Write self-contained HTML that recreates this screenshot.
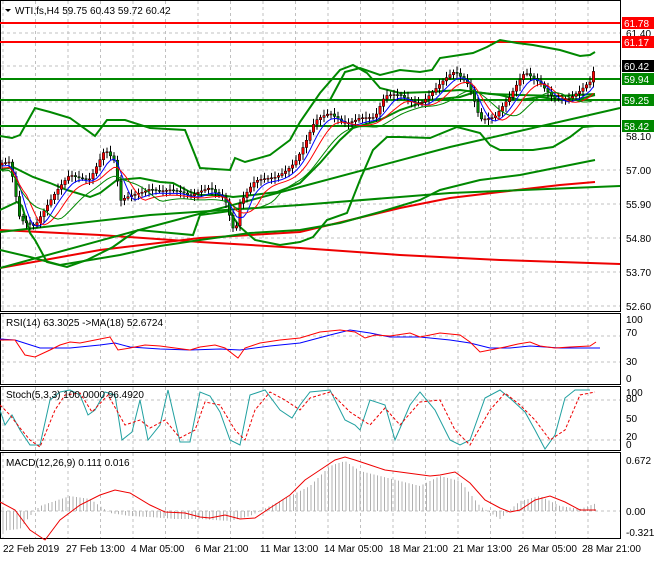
<!DOCTYPE html>
<html><head><meta charset="utf-8"><style>
body{margin:0;background:#fff;width:660px;height:560px;overflow:hidden;font-family:"Liberation Sans",sans-serif}
svg text{font-family:"Liberation Sans",sans-serif;font-size:10px;fill:#000}
</style></head><body>
<svg id="s" width="660" height="560" xmlns="http://www.w3.org/2000/svg">
<rect width="660" height="560" fill="#fff"/>
<g id="grid" stroke="#c0c0c0" stroke-dasharray="3,3" stroke-width="1"></g>
<g fill="none" stroke="#000" stroke-width="1">
<rect x="0.5" y="0.5" width="620" height="311"/>
<rect x="0.5" y="313.5" width="620" height="71"/>
<rect x="0.5" y="386.5" width="620" height="64"/>
<rect x="0.5" y="452.5" width="620" height="86"/>
</g>
<g fill="none" stroke-width="2">
<line x1="0" y1="23" x2="620" y2="23" stroke="#f00"/>
<line x1="0" y1="42" x2="620" y2="42" stroke="#f00"/>
<line x1="0" y1="79" x2="620" y2="79" stroke="#080"/>
<line x1="0" y1="100" x2="620" y2="100" stroke="#080"/>
<line x1="0" y1="126" x2="620" y2="126" stroke="#080"/>
<polyline points="0,230 100,235 200,242 300,248 400,255 500,260 620,264" stroke="#e00"/>
<polyline points="0,268 100,250 200,238 300,232 350,220 400,208 450,198 500,192 560,185 595,182" stroke="#e00"/>
<polyline points="0,232 150,215 300,205 450,193 620,186" stroke="#080"/>
<polyline points="0,268 150,227 300,187 450,147 620,108" stroke="#080"/>
<polyline points="0,250 30,257 60,265 90,260 120,255 160,246 200,240 250,233 300,230 340,223 380,212 420,200 440,190 480,180 520,175 560,167 595,160" stroke="#080"/>
<!-- outer upper band -->
<polyline points="0,136 12,138 20,135 35,108 50,112 70,118 95,136 107,120 125,120 150,128 185,130 195,155 200,168 230,170 235,158 245,162 270,155 290,140 300,122 320,93 340,70 353,65 367,73 380,88 400,93 430,92 460,90 490,94 520,95 560,96 595,94" stroke="#080"/>
<!-- top band -->
<polyline points="330,100 345,72 360,68 380,75 400,70 420,72 432,70 440,58 460,55 473,53 487,47 500,40 517,43 533,45 560,50 580,56 590,55 595,52" stroke="#080"/>
<!-- inner band upper -->
<polyline points="0,170 13,167 23,172 33,177 50,183 67,190 90,197 100,193 117,180 140,178 160,182 173,183 190,192 200,195 220,195 233,197 253,195 277,192 300,183 320,163 340,140 353,128 380,120 400,110 430,100 460,97 475,92 500,95 520,100 540,97 560,100 580,99 595,95" stroke="#080"/>
<!-- outer lower -->
<polyline points="0,210 17,202 22,206 30,233 35,240 47,262 67,267 87,260 113,247 127,237 138,230 160,232 193,235 200,215 230,211 233,217 240,227 255,240 280,245 300,242 313,237 327,220 347,213 360,180 373,150 387,137 400,137 430,138 457,127 480,133 490,145 500,150 533,150 553,147 570,137 583,127 595,126" stroke="#080"/>
</g>
<g id="cand"></g>
<g id="ma" fill="none" stroke-width="1"></g>
<g id="axis"></g>
<rect x="622" y="17" width="32" height="12" fill="#f00"/><text x="624" y="27" style="fill:#fff">61.78</text>
<rect x="622" y="36" width="32" height="12" fill="#f00"/><text x="624" y="46" style="fill:#fff">61.17</text>
<rect x="622" y="60" width="32" height="12" fill="#000"/><text x="624" y="70" style="fill:#fff">60.42</text>
<rect x="622" y="73" width="32" height="12" fill="#080"/><text x="624" y="83" style="fill:#fff">59.94</text>
<rect x="622" y="94" width="32" height="12" fill="#080"/><text x="624" y="104" style="fill:#fff">59.25</text>
<rect x="622" y="120" width="32" height="12" fill="#080"/><text x="624" y="130" style="fill:#fff">58.42</text>
<path d="M5,9 L11,9 L8,12 Z" fill="#000"/>
<text x="15" y="14">WTI.fs,H4  59.75 60.43 59.72 60.42</text>
<polyline fill="none" stroke="#00f" points="0,339 15,340 40,348 70,348 100,345 115,343 130,347 160,349 190,350 220,349 240,350 270,346 300,343 330,335 350,330 370,333 390,337 420,337 450,340 470,343 490,348 510,348 530,346 560,348 590,348 600,348"/>
<polyline fill="none" stroke="#f00" points="0,340 15,340 25,355 35,357 50,350 60,345 70,342 80,343 95,340 110,337 118,350 130,348 145,345 160,346 175,348 190,350 200,347 215,345 225,348 238,358 245,348 260,343 280,340 300,338 320,332 340,330 355,332 365,338 375,335 390,336 410,333 420,337 440,333 460,335 470,342 480,352 490,350 505,347 518,344 530,342 540,346 555,348 570,347 590,346 596,342"/>
<text x="6" y="326">RSI(14) 63.3025  -&gt;MA(18) 52.6724</text>
<text x="626" y="323">100</text><text x="626" y="336">70</text><text x="626" y="365">30</text><text x="626" y="382">0</text>
<polyline fill="none" stroke="#20a0a0" points="0,410 5,425 12,415 20,430 30,445 40,445 50,400 60,392 70,390 80,395 88,415 95,410 105,392 115,395 122,440 132,432 140,400 148,440 160,425 168,390 180,442 190,442 200,392 210,396 220,412 230,440 240,445 250,395 265,390 280,410 292,418 300,405 310,392 330,390 345,420 355,425 360,430 370,400 385,405 395,440 410,405 420,392 435,410 450,440 460,445 470,440 485,398 500,390 512,400 525,412 535,430 545,449 555,435 565,398 575,390 590,390"/>
<polyline fill="none" stroke="#e00" stroke-dasharray="3,2" points="0,405 10,415 20,428 30,440 40,447 55,410 65,395 80,393 92,412 108,395 125,425 140,420 150,428 165,420 180,438 195,430 205,402 220,405 235,430 245,440 255,410 270,392 285,400 300,410 310,398 330,392 350,412 370,425 385,408 400,425 420,402 440,400 455,430 470,445 490,410 505,393 520,405 535,420 550,440 565,430 580,395 595,392"/>
<text x="6" y="398">Stoch(5,3,3) 100.0000 96.4920</text>
<text x="626" y="396">100</text><text x="626" y="402">80</text><text x="626" y="422">50</text><text x="626" y="440">20</text><text x="626" y="448">0</text>
<g id="hist" stroke="#b0b0b0" stroke-width="1"></g>
<polyline fill="none" stroke="#e00" points="0,502 15,510 30,530 45,540 60,520 80,505 100,495 115,490 130,493 150,505 165,512 185,513 200,517 210,518 225,515 240,519 255,518 270,508 290,495 305,480 320,470 335,460 345,457 355,460 370,465 385,470 400,472 415,474 430,476 440,475 455,472 470,483 485,500 500,508 510,512 520,510 535,500 550,496 565,502 580,510 596,510"/>
<text x="6" y="466">MACD(12,26,9) 0.111 0.016</text>
<text x="626" y="464">0.672</text><text x="626" y="515">0.00</text><text x="626" y="536">-0.321</text>
<g font-size="10">
<text x="3" y="552">22 Feb 2019</text><text x="66" y="552">27 Feb 13:00</text><text x="131" y="552">4 Mar 05:00</text><text x="195" y="552">6 Mar 21:00</text><text x="260" y="552">11 Mar 13:00</text><text x="324" y="552">14 Mar 05:00</text><text x="389" y="552">18 Mar 21:00</text><text x="453" y="552">21 Mar 13:00</text><text x="518" y="552">26 Mar 05:00</text><text x="582" y="552">28 Mar 21:00</text>
</g>
</svg>
<script>
var NS="http://www.w3.org/2000/svg";
function el(p,t,a){var e=document.createElementNS(NS,t);for(var k in a)e.setAttribute(k,a[k]);document.getElementById(p).appendChild(e);return e;}
for(var x=3;x<620;x+=32.5){el("grid","line",{x1:x,y1:1,x2:x,y2:311});el("grid","line",{x1:x,y1:314,x2:x,y2:384});el("grid","line",{x1:x,y1:387,x2:x,y2:450});el("grid","line",{x1:x,y1:453,x2:x,y2:538});}
[33,66,102,136,170,204,238,272,306].forEach(function(y){el("grid","line",{x1:1,y1:y,x2:620,y2:y});});
[336,362,400,440,511].forEach(function(y){el("grid","line",{x1:1,y1:y,x2:620,y2:y});});
var ax=[["61.40",37],["58.10",140],["57.00",174],["55.90",208],["54.80",242],["53.70",276],["52.60",310]];
ax.forEach(function(a){var t=el("axis","text",{x:626,y:a[1]});t.textContent=a[0];});
var k=[[0,165],[10,160],[20,215],[35,225],[50,205],[70,175],[90,175],[105,150],[115,165],[120,205],[135,195],[150,185],[170,190],[190,200],[210,185],[225,195],[235,235],[240,205],[255,185],[275,175],[295,160],[305,145],[315,125],[330,115],[345,120],[360,115],[375,120],[385,100],[400,95],[420,100],[435,90],[455,75],[470,85],[480,115],[495,115],[510,100],[525,75],[540,80],[555,95],[570,100],[580,95],[590,85],[596,65]];
function P(x){for(var i=0;i<k.length-1;i++){if(x<=k[i+1][0]){var t=(x-k[i][0])/(k[i+1][0]-k[i][0]);return k[i][1]+t*(k[i+1][1]-k[i][1]);}}return k[k.length-1][1];}
var prev=P(0),cl=[];
for(var x=2;x<=596;x+=3.5){var c=P(x)+Math.sin(x*1.7)*4,o=prev,hi=Math.min(o,c)-2-Math.abs(Math.sin(x*3))*4,lo=Math.max(o,c)+2+Math.abs(Math.cos(x*2))*4;
el("cand","line",{x1:x,y1:hi,x2:x,y2:lo,stroke:"#000"});
var up=c<o;el("cand","rect",{x:x-1.2,y:Math.min(o,c),width:2.4,height:Math.max(1,Math.abs(o-c)),fill:up?"#f00":"#080",stroke:"#000","stroke-width":0.5});
cl.push([x,c]);prev=c;}
function ma(n,col,off){var pts=[];for(var i=0;i<cl.length;i++){var s=0,m=0;for(var j=Math.max(0,i-n+1);j<=i;j++){s+=cl[j][1];m++;}pts.push(cl[i][0]+","+(s/m+off));}el("ma","polyline",{points:pts.join(" "),stroke:col});}
ma(5,"#00f",3);ma(8,"#f00",5);ma(13,"#080",8);
var hv=[[0,-20],[20,-18],[30,-5],[40,5],[55,10],[70,15],[90,12],[110,-2],[130,-5],[150,-6],[175,-8],[200,-8],[230,-10],[250,-5],[270,5],[290,15],[310,25],[330,45],[345,50],[360,40],[380,35],[400,30],[420,25],[440,35],[460,30],[480,5],[500,-8],[520,10],[540,15],[560,5],[580,2],[597,8]];
function H(x){for(var i=0;i<hv.length-1;i++){if(x<=hv[i+1][0]){var t=(x-hv[i][0])/(hv[i+1][0]-hv[i][0]);return hv[i][1]+t*(hv[i+1][1]-hv[i][1]);}}return 0;}
for(var x=3;x<=597;x+=3.5){var v=H(x);el("hist","line",{x1:x,y1:511,x2:x,y2:511-v});}
</script>
</body></html>
